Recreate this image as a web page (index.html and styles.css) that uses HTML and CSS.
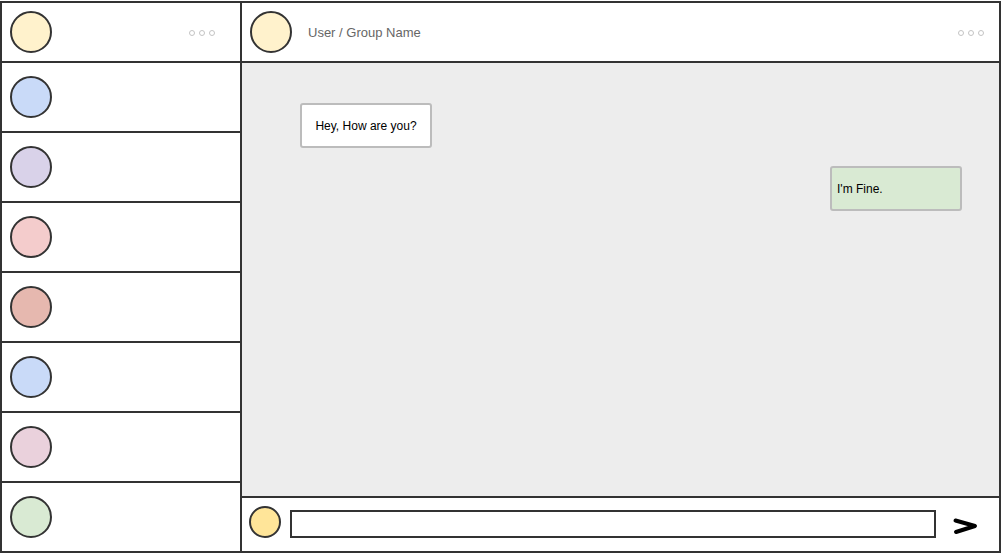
FILE: index.html
```html
<!DOCTYPE html>
<html>
<head>
<meta charset="utf-8">
<link rel="stylesheet" href="styles.css">
</head>
<body>
<div class="app">
  <aside class="sidebar">
    <div class="side-head">
      <span class="avatar yellow"></span>
      <svg class="dots" width="30" height="8" viewBox="0 0 30 8"><circle cx="4" cy="4" r="2.5"/><circle cx="14" cy="4" r="2.5"/><circle cx="24" cy="4" r="2.5"/></svg>
    </div>
    <div class="row"><span class="avatar blue"></span></div>
    <div class="row"><span class="avatar lavender"></span></div>
    <div class="row"><span class="avatar pink"></span></div>
    <div class="row"><span class="avatar rose"></span></div>
    <div class="row"><span class="avatar blue"></span></div>
    <div class="row"><span class="avatar mauve"></span></div>
    <div class="row last"><span class="avatar green"></span></div>
  </aside>
  <main class="chat">
    <div class="chat-head">
      <span class="avatar yellow"></span>
      <span class="name">User / Group Name</span>
      <svg class="dots" width="30" height="8" viewBox="0 0 30 8"><circle cx="4" cy="4" r="2.5"/><circle cx="14" cy="4" r="2.5"/><circle cx="24" cy="4" r="2.5"/></svg>
    </div>
    <div class="messages">
      <div class="bubble in">Hey, How are you?</div>
      <div class="bubble out">I'm Fine.</div>
    </div>
    <div class="composer">
      <span class="avatar small"></span>
      <div class="input"></div>
      <svg class="send" width="26" height="18" viewBox="0 0 26 18"><path d="M2.5 3.5 L22 9 L3 15" fill="none" stroke="#000" stroke-width="4" stroke-linecap="round" stroke-linejoin="round"/></svg>
    </div>
  </main>
</div>
</body>
</html>
```
FILE: styles.css
```css
* { box-sizing: border-box; }
html, body { margin: 0; padding: 0; background: #fff; }
body { font-family: "Liberation Sans", Arial, sans-serif; }

.app {
  margin-top: 1px;
  width: 1001px;
  height: 552px;
  border: 2px solid #333;
  display: flex;
}

.sidebar {
  width: 240px;
  border-right: 2px solid #333;
  display: flex;
  flex-direction: column;
}
.side-head {
  height: 60px;
  border-bottom: 2px solid #333;
  display: flex;
  align-items: center;
  padding-left: 8px;
  padding-right: 22px;
  justify-content: space-between;
}
.row {
  height: 70px;
  border-bottom: 2px solid #333;
  display: flex;
  align-items: center;
  padding-left: 8px;
}
.row.last { height: 68px; border-bottom: none; }

.avatar {
  display: block;
  width: 42px;
  height: 42px;
  border-radius: 50%;
  border: 2px solid #333;
  flex: none;
}
.yellow { background: #fff2cc; }
.blue { background: #c9daf8; }
.lavender { background: #d9d2e9; }
.pink { background: #f4cccc; }
.rose { background: #e6b8af; }
.mauve { background: #ead1dc; }
.green { background: #d9ead3; }

.dots { display: block; margin-top: 2px; }
.dots circle { fill: none; stroke: #c4c4c4; stroke-width: 1; }

.chat {
  flex: 1;
  display: flex;
  flex-direction: column;
}
.chat-head {
  height: 60px;
  border-bottom: 2px solid #333;
  display: flex;
  align-items: center;
  padding-left: 8px;
  padding-right: 12px;
}
.chat-head .name {
  margin-left: 16px;
  font-size: 13px;
  color: #666;
  flex: 1;
}
.messages {
  height: 433px;
  background: #ededed;
  display: flex;
  flex-direction: column;
  align-items: flex-start;
  padding: 40px 37px 0 58px;
}
.bubble {
  width: 132px;
  height: 45px;
  border: 2px solid #bcbcbc;
  border-radius: 3px;
  font-size: 12px;
  color: #000;
  display: flex;
  align-items: center;
}
.bubble.in {
  background: #fff;
  justify-content: center;
}
.bubble.out {
  background: #d9ead3;
  align-self: flex-end;
  margin-top: 18px;
  padding-left: 5px;
}
.composer {
  border-top: 2px solid #333;
  flex: 1;
  display: flex;
  align-items: center;
  padding-left: 7px;
}
.avatar.small {
  width: 32px;
  height: 32px;
  background: #ffe599;
  margin-top: -5px;
}
.input {
  margin-left: 9px;
  width: 646px;
  height: 28px;
  border: 2px solid #333;
  background: #fff;
  margin-top: -2px;
}
.send {
  display: block;
  margin-left: 17px;
  margin-top: 3px;
}
```
